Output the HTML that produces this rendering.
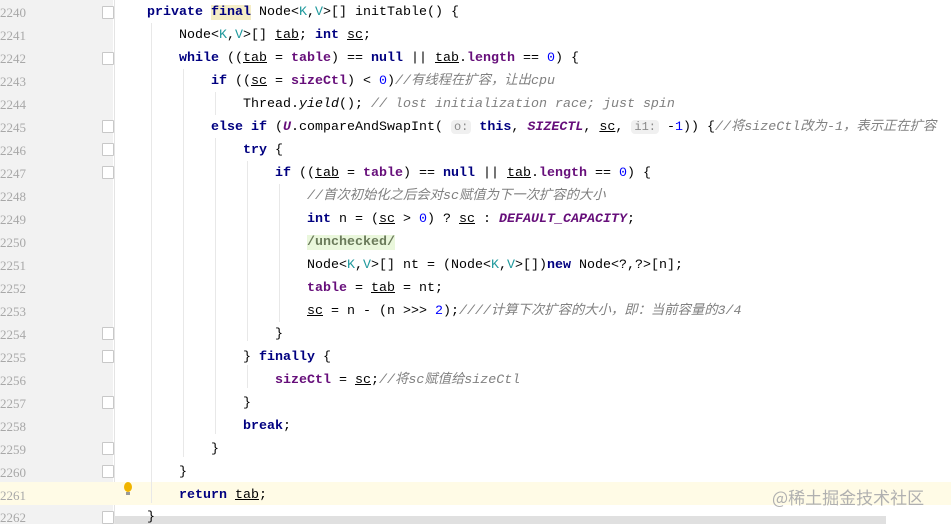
<!DOCTYPE html><html><head><meta charset="utf-8"><style>
body{margin:0;width:951px;height:524px;overflow:hidden;background:#fff;position:relative;font-family:"Liberation Mono","Noto Sans CJK SC",monospace;font-size:13.33px}
.g{position:absolute;left:0;top:0;width:113px;height:524px;background:#f2f2f2}
.gl{position:absolute;left:114px;top:0;width:1px;height:524px;background:#e4e4e4}
.l{position:absolute;left:0;height:23px;line-height:23px;width:951px;white-space:pre}
.n{position:absolute;left:0;width:30px;color:#a8a8a8;font-family:"Liberation Serif",serif;font-size:13px}
.c{position:absolute;color:#000}
.k{color:#000080;font-weight:bold}
.f{color:#660e7a;font-weight:bold}
.s{color:#660e7a;font-weight:bold;font-style:italic}
.num{color:#0000ff}
.cm{color:#808080;font-style:italic}
.t{color:#20999d}
.u{text-decoration:underline}
.h{background:#f0f0f0;color:#8a8a8a;border-radius:4px;padding:0 3px;font-size:12px}
.fold{position:absolute;left:102px;width:10px;height:11px;border:1px solid #c8c8c8;background:#fff;border-radius:1px}
.hl{position:absolute;left:0;top:482px;width:951px;height:23px;background:#fffbe6}
.ig{position:absolute;width:1px;background:#e8e8e8}
</style></head><body>
<div class="g"></div><div class="gl"></div>
<div class="hl"></div>
<div style="position:absolute;left:115px;top:516px;width:771px;height:8px;background:#e0e0e0"></div>
<div class="ig" style="left:151px;top:23px;height:480px"></div>
<div class="ig" style="left:183px;top:69px;height:388px"></div>
<div class="ig" style="left:215px;top:92px;height:23px"></div>
<div class="ig" style="left:215px;top:138px;height:296px"></div>
<div class="ig" style="left:247px;top:161px;height:180px"></div>
<div class="ig" style="left:279px;top:184px;height:138px"></div>
<div class="ig" style="left:247px;top:365px;height:23px"></div>
<div style="position:absolute;left:124px;top:482px;width:8px;height:10px;border-radius:50%;background:#f0b400"></div>
<div style="position:absolute;left:126px;top:492px;width:4px;height:3px;background:#999"></div>
<div style="position:absolute;left:772px;top:484px;color:#b0b0b0;font-family:'Noto Sans CJK SC',sans-serif;font-size:17px">@稀土掘金技术社区</div>
<div class="fold" style="top:6px"></div><div class="fold" style="top:52px"></div><div class="fold" style="top:120px"></div><div class="fold" style="top:143px"></div><div class="fold" style="top:166px"></div>
<div class="fold" style="top:327px"></div><div class="fold" style="top:350px"></div><div class="fold" style="top:396px"></div><div class="fold" style="top:442px"></div><div class="fold" style="top:465px"></div><div class="fold" style="top:511px"></div>

<div class="l" style="top:1px"><span class="n">2240</span><span class="c" style="left:147px"><span class="k">private</span> <span class="k" style="background:#f5edc6">final</span> Node&lt;<span class="t">K</span>,<span class="t">V</span>&gt;[] initTable() {</span></div>
<div class="l" style="top:24px"><span class="n">2241</span><span class="c" style="left:179px">Node&lt;<span class="t">K</span>,<span class="t">V</span>&gt;[] <span class="u">tab</span>; <span class="k">int</span> <span class="u">sc</span>;</span></div>
<div class="l" style="top:47px"><span class="n">2242</span><span class="c" style="left:179px"><span class="k">while</span> ((<span class="u">tab</span> = <span class="f">table</span>) == <span class="k">null</span> || <span class="u">tab</span>.<span class="f">length</span> == <span class="num">0</span>) {</span></div>
<div class="l" style="top:70px"><span class="n">2243</span><span class="c" style="left:211px"><span class="k">if</span> ((<span class="u">sc</span> = <span class="f">sizeCtl</span>) &lt; <span class="num">0</span>)<span class="cm">//有线程在扩容，让出cpu</span></span></div>
<div class="l" style="top:93px"><span class="n">2244</span><span class="c" style="left:243px">Thread.<i>yield</i>(); <span class="cm">// lost initialization race; just spin</span></span></div>
<div class="l" style="top:116px"><span class="n">2245</span><span class="c" style="left:211px"><span class="k">else if</span> (<span class="s">U</span>.compareAndSwapInt( <span class="h">o:</span> <span class="k">this</span>, <span class="s">SIZECTL</span>, <span class="u">sc</span>, <span class="h">i1:</span> -<span class="num">1</span>)) {<span class="cm">//将sizeCtl改为-1，表示正在扩容</span></span></div>
<div class="l" style="top:139px"><span class="n">2246</span><span class="c" style="left:243px"><span class="k">try</span> {</span></div>
<div class="l" style="top:162px"><span class="n">2247</span><span class="c" style="left:275px"><span class="k">if</span> ((<span class="u">tab</span> = <span class="f">table</span>) == <span class="k">null</span> || <span class="u">tab</span>.<span class="f">length</span> == <span class="num">0</span>) {</span></div>
<div class="l" style="top:185px"><span class="n">2248</span><span class="c" style="left:307px"><span class="cm">//首次初始化之后会对sc赋值为下一次扩容的大小</span></span></div>
<div class="l" style="top:208px"><span class="n">2249</span><span class="c" style="left:307px"><span class="k">int</span> n = (<span class="u">sc</span> &gt; <span class="num">0</span>) ? <span class="u">sc</span> : <span class="s">DEFAULT_CAPACITY</span>;</span></div>
<div class="l" style="top:231px"><span class="n">2250</span><span class="c" style="left:307px"><span style="background:#eaf7dc;color:#6a7a5a;font-weight:bold">/unchecked/</span></span></div>
<div class="l" style="top:254px"><span class="n">2251</span><span class="c" style="left:307px">Node&lt;<span class="t">K</span>,<span class="t">V</span>&gt;[] nt = (Node&lt;<span class="t">K</span>,<span class="t">V</span>&gt;[])<span class="k">new</span> Node&lt;?,?&gt;[n];</span></div>
<div class="l" style="top:277px"><span class="n">2252</span><span class="c" style="left:307px"><span class="f">table</span> = <span class="u">tab</span> = nt;</span></div>
<div class="l" style="top:300px"><span class="n">2253</span><span class="c" style="left:307px"><span class="u">sc</span> = n - (n &gt;&gt;&gt; <span class="num">2</span>);<span class="cm">////计算下次扩容的大小，即：当前容量的3/4</span></span></div>
<div class="l" style="top:323px"><span class="n">2254</span><span class="c" style="left:275px">}</span></div>
<div class="l" style="top:346px"><span class="n">2255</span><span class="c" style="left:243px">} <span class="k">finally</span> {</span></div>
<div class="l" style="top:369px"><span class="n">2256</span><span class="c" style="left:275px"><span class="f">sizeCtl</span> = <span class="u">sc</span>;<span class="cm">//将sc赋值给sizeCtl</span></span></div>
<div class="l" style="top:392px"><span class="n">2257</span><span class="c" style="left:243px">}</span></div>
<div class="l" style="top:415px"><span class="n">2258</span><span class="c" style="left:243px"><span class="k">break</span>;</span></div>
<div class="l" style="top:438px"><span class="n">2259</span><span class="c" style="left:211px">}</span></div>
<div class="l" style="top:461px"><span class="n">2260</span><span class="c" style="left:179px">}</span></div>
<div class="l" style="top:484px"><span class="n">2261</span><span class="c" style="left:179px"><span class="k">return</span> <span class="u">tab</span>;</span></div>
<div class="l" style="top:506px"><span class="n">2262</span><span class="c" style="left:147px">}</span></div>
</body></html>
